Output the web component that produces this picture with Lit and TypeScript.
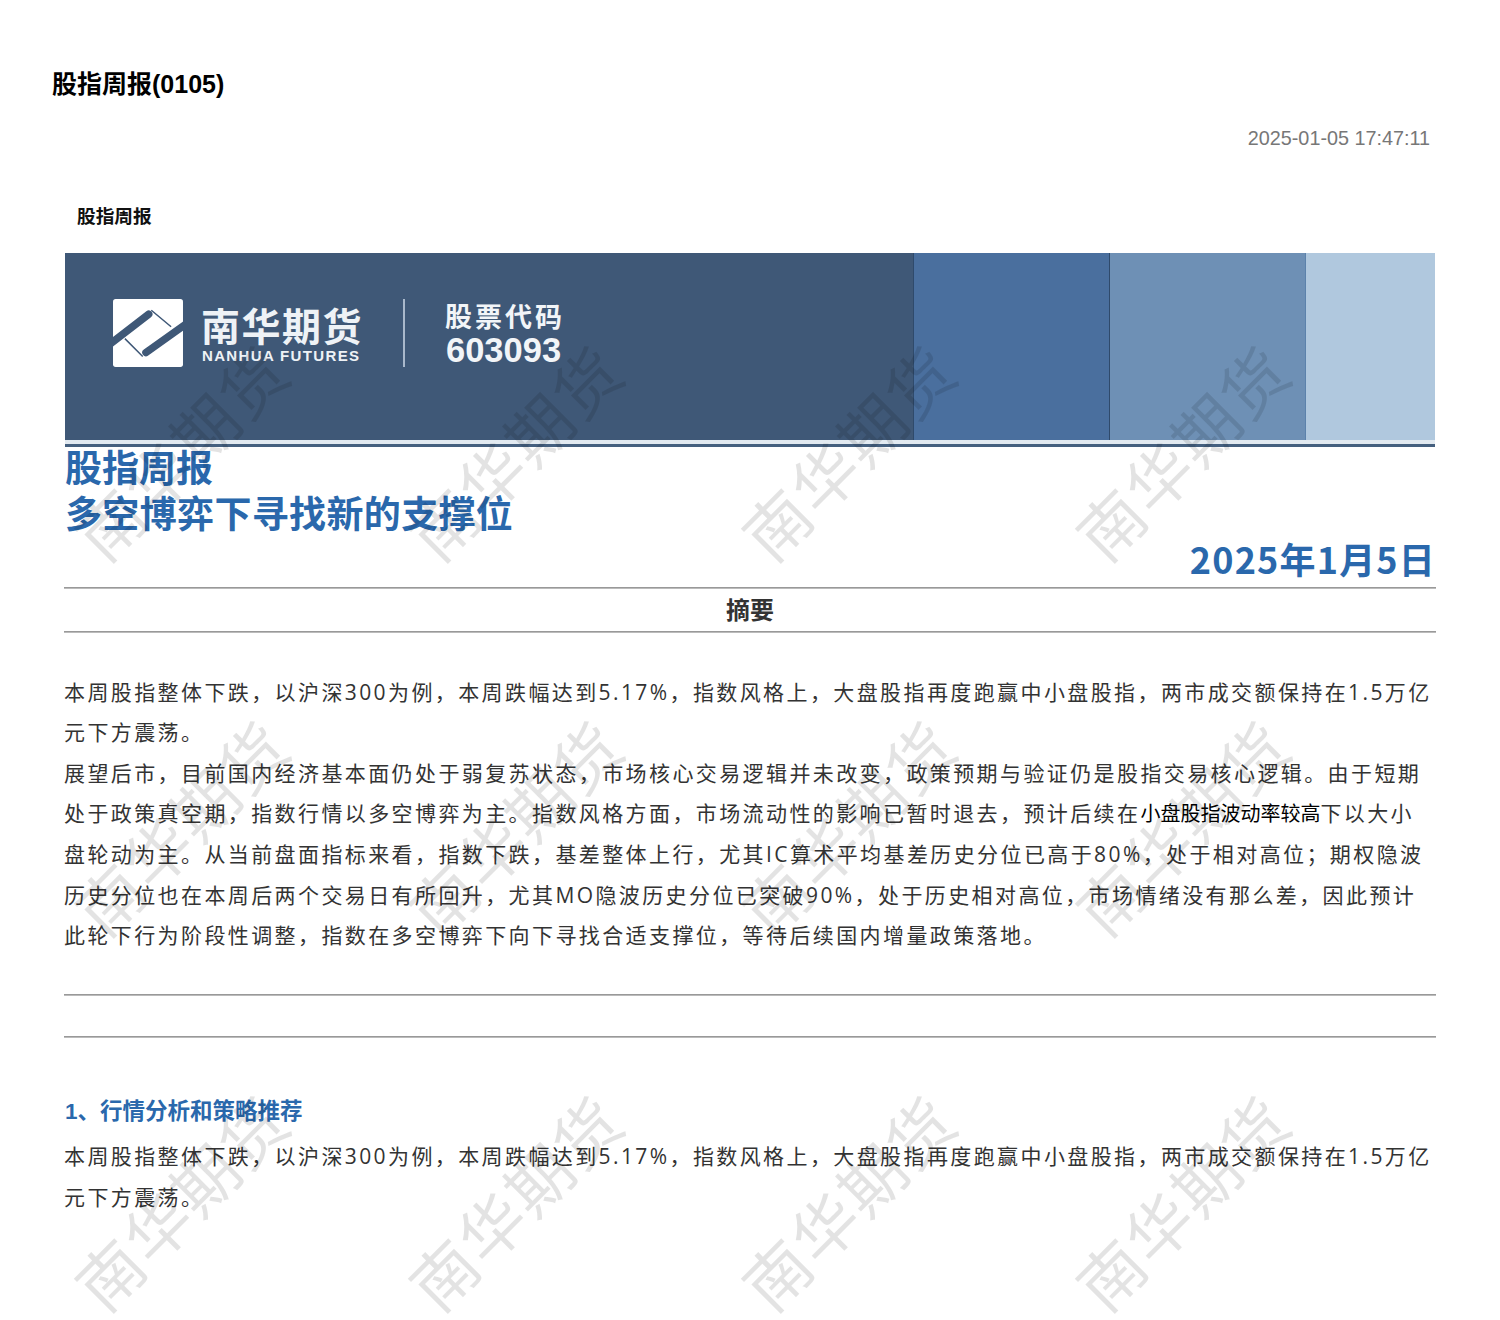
import { LitElement, html, css } from 'lit';
import { customElement } from 'lit/decorators.js';

const SUMMARY_LINES = [
  html`本周股指整体下跌，以沪深300为例，本周跌幅达到5.17%，指数风格上，大盘股指再度跑赢中小盘股指，两市成交额保持在1.5万亿`,
  html`元下方震荡。`,
  html`展望后市，目前国内经济基本面仍处于弱复苏状态，市场核心交易逻辑并未改变，政策预期与验证仍是股指交易核心逻辑。由于短期`,
  html`处于政策真空期，指数行情以多空博弈为主。指数风格方面，市场流动性的影响已暂时退去，预计后续在<span class="tight">小盘股指波动率较高</span>下以大小`,
  html`盘轮动为主。从当前盘面指标来看，指数下跌，基差整体上行，尤其IC算术平均基差历史分位已高于80%，处于相对高位；期权隐波`,
  html`历史分位也在本周后两个交易日有所回升，尤其MO隐波历史分位已突破90%，处于历史相对高位，市场情绪没有那么差，因此预计`,
  html`此轮下行为阶段性调整，指数在多空博弈下向下寻找合适支撑位，等待后续国内增量政策落地。`,
];

const ANALYSIS_LINES = [
  html`本周股指整体下跌，以沪深300为例，本周跌幅达到5.17%，指数风格上，大盘股指再度跑赢中小盘股指，两市成交额保持在1.5万亿`,
  html`元下方震荡。`,
];

// watermark grid: 4 columns, 3 rows
const MARK_X = [180, 513.5, 847, 1180.5];
const MARK_Y = [451, 826, 1201];

@customElement('app-root')
export class AppRoot extends LitElement {
  static styles = css`
    :host {
      display: block;
      position: relative;
      height: 1320px;
      overflow: hidden;
      background: #fff;
      font-family: 'Liberation Sans', 'Noto Sans CJK SC', sans-serif;
      color: #333;
    }

    .page {
      display: flex;
      flex-direction: column;
      padding: 68px 64px 0 52px;
    }

    .doc-title {
      margin: 0;
      font-size: 25px;
      line-height: 32px;
      font-weight: 700;
      color: #000;
    }

    .doc-time {
      margin: 25px 6px 0 0;
      text-align: right;
      font-size: 19.8px;
      line-height: 26px;
      color: #777;
    }

    .doc-tag {
      margin: 53px 0 0 25px;
      font-size: 18.7px;
      line-height: 26px;
      font-weight: 700;
      color: #111;
    }

    .report {
      display: flex;
      flex-direction: column;
      width: 1372px;
      margin: 23px 0 0 12px;
    }

    .banner {
      display: flex;
      width: 1370px;
      margin-left: 1px;
      height: 187px;
    }

    .seg-main {
      width: 848px;
      display: flex;
      align-items: flex-start;
      padding: 46px 0 0 47px;
      box-sizing: border-box;
      background: #3f5877;
    }

    .seg-a, .seg-b, .seg-c { box-sizing: border-box; border-left: 1px solid; }
    .seg-a { width: 196px; background: #4a6f9e; border-left-color: #2f4a6b; }
    .seg-b { width: 196px; background: #6e90b5; border-left-color: #2f4a6b; }
    .seg-c { width: 130px; background: #b0c8de; border-left-color: #5c82ab; }

    .logo-mark { width: 72px; height: 68px; flex: none; }

    .logo-name {
      display: flex;
      flex-direction: column;
      margin-left: 17px;
      color: #eef2f6;
      width: 165px;
    }

    .logo-cn {
      font-size: 39px;
      line-height: 44px;
      margin-top: 7px;
      font-weight: 700;
      letter-spacing: 1.5px;
      white-space: nowrap;
    }

    .logo-en {
      font-size: 15px;
      line-height: 16px;
      margin-top: -2px;
      margin-left: 1px;
      font-weight: 700;
      letter-spacing: 1.35px;
      white-space: nowrap;
    }

    .logo-rule {
      width: 2px;
      height: 68px;
      margin-left: 37px;
      background: #a9b8cb;
    }

    .stock {
      display: flex;
      flex-direction: column;
      margin-left: 40px;
      color: #f2f5f8;
      font-weight: 700;
    }

    .stock-label {
      font-size: 27px;
      line-height: 36px;
      margin-top: 1px;
      letter-spacing: 3px;
      white-space: nowrap;
    }

    .stock-code {
      font-size: 34.5px;
      line-height: 36px;
      margin: -4px 0 0 1px;
    }

    .banner-rule {
      height: 3px;
      width: 1370px;
      margin-left: 1px;
      border-top: 4px solid #e2eaf1;
      background: #45607f;
    }

    .headline {
      margin: 0 0 0 1px;
      color: #2a68ac;
      font-weight: 700;
      font-size: 37px;
      line-height: 46px;
    }

    .headline .sub { display: block; letter-spacing: 0.35px; }

    .report-date {
      margin: -4px 0 6px;
      text-align: right;
      color: #2a68ac;
      font-weight: 700;
      font-size: 36px;
      line-height: 46px;
      letter-spacing: 1.2px;
      font-family: 'Noto Sans CJK SC', sans-serif;
    }

    .rule {
      height: 2px;
      box-sizing: border-box;
      background: #bbb;
      border-top: 1px solid #999;
    }

    .summary-title {
      height: 42px;
      line-height: 44px;
      text-align: center;
      font-size: 24px;
      font-weight: 700;
      color: #333;
    }

    .body-text {
      margin: 0;
      font-size: 21px;
      line-height: 40.33px;
      letter-spacing: 2.4px;
      white-space: nowrap;
      color: #333;
      font-family: 'Open Sans', 'Noto Sans CJK SC', sans-serif;
    }

    .tight { letter-spacing: 0; font-size: 20px; color: #000; }

    .summary { margin-top: 39px; }

    .rule-top { margin-top: 39px; }
    .rule-next { margin-top: 40px; }

    .section-title {
      margin: 56px 0 0 1px;
      font-size: 22.5px;
      line-height: 36px;
      font-weight: 700;
      color: #2a68ac;
    }

    .analysis { margin-top: 6px; }

    .mark {
      position: absolute;
      transform: translate(-50%, -50%) rotate(-45deg);
      font-family: 'Noto Sans CJK SC', sans-serif;
      font-size: 65px;
      line-height: 70px;
      letter-spacing: 2px;
      white-space: nowrap;
      color: rgba(0, 0, 0, 0.11);
      pointer-events: none;
    }
  `;

  private renderLines(lines: unknown[]) {
    return lines.map((line) => html`${line}<br />`);
  }

  render() {
    return html`
      <div class="page">
        <h1 class="doc-title">股指周报(0105)</h1>
        <div class="doc-time">2025-01-05 17:47:11</div>
        <div class="doc-tag">股指周报</div>

        <div class="report">
          <div class="banner">
            <div class="seg-main">
              <svg class="logo-mark" viewBox="14 14 212 206" aria-hidden="true">
                <rect x="14" y="14" width="212" height="206" rx="8" fill="#fff" />
                <path d="M8 148 L122 60 M232 92 L114 176" stroke="#3f5877" stroke-width="23" fill="none" stroke-linecap="round" />
                <path d="M130 48 L190 98 M104 188 L50 134" stroke="#3f5877" stroke-width="4.5" fill="none" />
              </svg>
              <div class="logo-name">
                <span class="logo-cn">南华期货</span>
                <span class="logo-en">NANHUA FUTURES</span>
              </div>
              <div class="logo-rule"></div>
              <div class="stock">
                <span class="stock-label">股票代码</span>
                <span class="stock-code">603093</span>
              </div>
            </div>
            <div class="seg-a"></div>
            <div class="seg-b"></div>
            <div class="seg-c"></div>
          </div>
          <div class="banner-rule"></div>

          <h2 class="headline">股指周报<span class="sub">多空博弈下寻找新的支撑位</span></h2>
          <div class="report-date">2025年1月5日</div>

          <div class="rule"></div>
          <div class="summary-title">摘要</div>
          <div class="rule"></div>

          <p class="body-text summary">${this.renderLines(SUMMARY_LINES)}</p>

          <div class="rule rule-top"></div>
          <div class="rule rule-next"></div>

          <div class="section-title">1、行情分析和策略推荐</div>
          <p class="body-text analysis">${this.renderLines(ANALYSIS_LINES)}</p>
        </div>
      </div>

      ${MARK_Y.map((y) =>
        MARK_X.map((x) => html`<div class="mark" style="left: ${x}px; top: ${y}px">南华期货</div>`)
      )}
    `;
  }
}
